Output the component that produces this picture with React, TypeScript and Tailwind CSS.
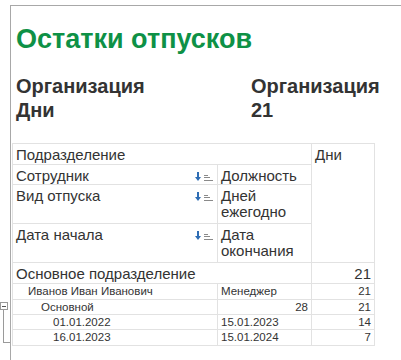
import React from "react"

function SortIcon() {
  return (
    <svg width="19" height="10" viewBox="0 0 19 10" className="shrink-0 mt-[4px]">
      <rect x="2" y="0" width="2" height="5" fill="#2e6db4" />
      <polygon points="0,5 6,5 3,9" fill="#2e6db4" />
      <rect x="9" y="3" width="4" height="1" fill="#8a8a8a" />
      <rect x="9" y="5" width="6" height="1" fill="#8a8a8a" />
      <rect x="9" y="8" width="9" height="1" fill="#8a8a8a" />
    </svg>
  )
}

const th = "border border-[#e2e2e2] align-top px-[3px] pt-[3px] text-[15px] leading-[16px] font-normal text-left"
const td = "border border-[#e2e2e2] px-[3px] text-[11.5px] leading-[13px] whitespace-nowrap"

const rows = [
  { label: "Иванов Иван Иванович", indent: "pl-[15px]", mid: "Менеджер", midRight: false, days: "21", h: "h-[16px]" },
  { label: "Основной", indent: "pl-[28px]", mid: "28", midRight: true, days: "21", h: "h-[15px]" },
  { label: "01.01.2022", indent: "pl-[40px]", mid: "15.01.2023", midRight: false, days: "14", h: "h-[15px]" },
  { label: "16.01.2023", indent: "pl-[40px]", mid: "15.01.2024", midRight: false, days: "7", h: "h-[16px]" },
]

export default function App() {
  return (
    <div className="relative w-[401px] h-[360px] overflow-hidden bg-white pt-[5px] font-['Liberation_Sans',Arial,sans-serif] text-[#333]">
      {/* group marker in the left gutter */}
      <div className="absolute left-[0px] top-[302px] w-[8px] h-[8px] border border-[#9a9a9a] bg-white flex items-center justify-center">
        <div className="w-[4px] h-px bg-[#555]" />
      </div>
      <div className="absolute left-[3px] top-[310px] w-[7px] h-[33px] border-l border-b border-[#9a9a9a]" />

      <div className="ml-[10px] h-full border-t border-l border-[#a8a8a8]">
        <h1 className="pl-[5px] pt-[18px] text-[27px] leading-[30px] font-bold text-[#0e9146]">Остатки отпусков</h1>

        <div className="mt-[20px] pl-[5px] grid grid-cols-[235px_1fr] text-[20px] leading-[24px] font-bold text-[#333]">
          <div>Организация</div>
          <div>Организация</div>
          <div>Дни</div>
          <div>21</div>
        </div>

        <table className="mt-[21px] ml-[1px] table-fixed border-collapse w-[362px]">
          <colgroup>
            <col className="w-[205px]" />
            <col className="w-[94px]" />
            <col className="w-[63px]" />
          </colgroup>
          <thead>
            <tr className="h-[21px]">
              <th colSpan={2} className={th}>Подразделение</th>
              <th rowSpan={4} className={th}>Дни</th>
            </tr>
            <tr className="h-[20px]">
              <th className={th}>
                <div className="flex justify-between">
                  <span>Сотрудник</span>
                  <SortIcon />
                </div>
              </th>
              <th className={th}>Должность</th>
            </tr>
            <tr className="h-[39px]">
              <th className={th}>
                <div className="flex justify-between">
                  <span>Вид отпуска</span>
                  <SortIcon />
                </div>
              </th>
              <th className={th}>Дней ежегодно</th>
            </tr>
            <tr className="h-[39px]">
              <th className={th}>
                <div className="flex justify-between">
                  <span>Дата начала</span>
                  <SortIcon />
                </div>
              </th>
              <th className={th}>Дата окончания</th>
            </tr>
          </thead>
          <tbody>
            <tr className="h-[21px]">
              <td colSpan={2} className="border border-[#e2e2e2] px-[3px] text-[15px] leading-[17px] whitespace-nowrap">
                Основное подразделение
              </td>
              <td className="border border-[#e2e2e2] px-[3px] text-[15px] leading-[17px] text-right">21</td>
            </tr>
            {rows.map((r) => (
              <tr key={r.label} className={r.h}>
                <td className={`${td} ${r.indent}`}>{r.label}</td>
                <td className={`${td} ${r.midRight ? "text-right" : ""}`}>{r.mid}</td>
                <td className={`${td} text-right`}>{r.days}</td>
              </tr>
            ))}
          </tbody>
        </table>
      </div>
    </div>
  )
}
